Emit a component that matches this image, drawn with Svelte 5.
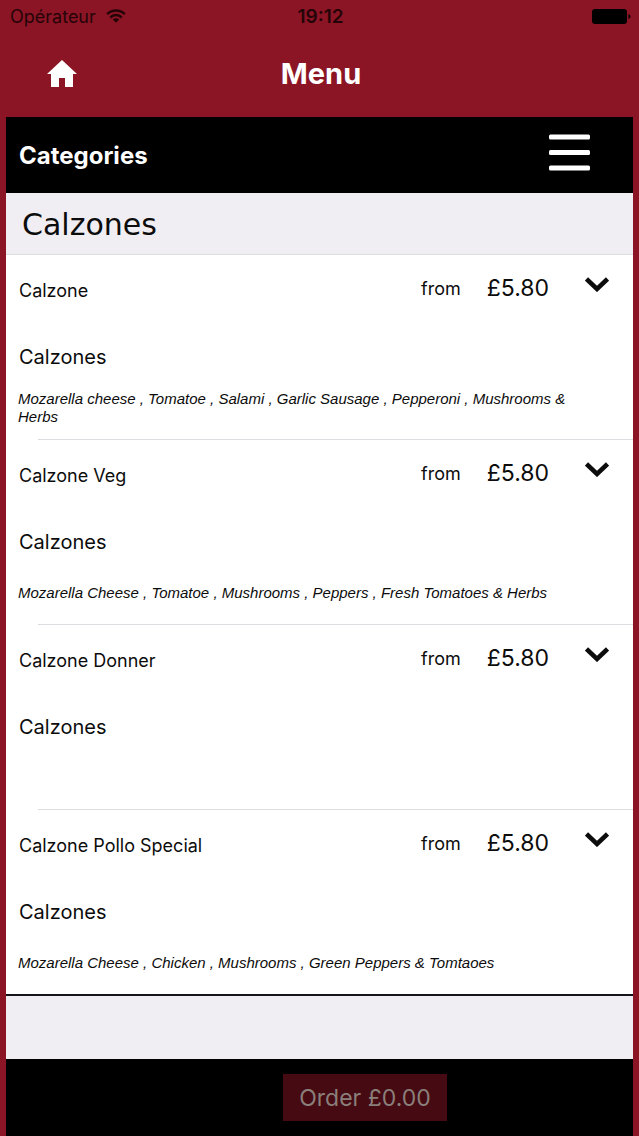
<script>
	const category = 'Calzones';

	const items = [
		{
			name: 'Calzone',
			price: 5.8,
			description:
				'Mozarella cheese , Tomatoe , Salami , Garlic Sausage , Pepperoni , Mushrooms & Herbs'
		},
		{
			name: 'Calzone Veg',
			price: 5.8,
			description: 'Mozarella Cheese , Tomatoe , Mushrooms , Peppers , Fresh Tomatoes & Herbs'
		},
		{ name: 'Calzone Donner', price: 5.8, description: '' },
		{
			name: 'Calzone Pollo Special',
			price: 5.8,
			description: 'Mozarella Cheese , Chicken , Mushrooms , Green Peppers & Tomtaoes'
		}
	];

	let total = $state(0);

	function formatPrice(value) {
		return '£' + value.toFixed(2);
	}
</script>

<div class="app">
	<div class="status-bar">
		<div class="carrier">
			<span>Opérateur</span>
			<svg width="20" height="14" viewBox="0 0 20 14" aria-hidden="true">
				<g fill="none" stroke="currentColor" stroke-width="2.5">
					<path d="M1.2 5.2a12.5 12.5 0 0 1 17.6 0" />
					<path d="M4.3 8.5a8 8 0 0 1 11.4 0" />
				</g>
				<path d="M10 13.8 6.8 10.6a4.5 4.5 0 0 1 6.4 0z" fill="currentColor" />
			</svg>
		</div>
		<span class="time">19:12</span>
		<svg class="battery" width="39" height="15" viewBox="0 0 39 15" aria-hidden="true">
			<rect width="35" height="15" rx="3" />
			<path d="M36.5 5q2 .8 2 2.500t-2 2.500z" />
		</svg>
	</div>

	<header class="nav">
		<a class="home" href="#home" aria-label="Home">
			<svg width="30" height="27" viewBox="0 0 30 27" aria-hidden="true">
				<path d="M15 0 30 14h-4v13h-8v-9h-6v9H4V14H0z" fill="#fff" />
			</svg>
		</a>
		<h1>Menu</h1>
	</header>

	<main class="panel">
		<div class="categories">
			<h2>Categories</h2>
			<button class="menu-button" aria-label="Show categories">
				<svg width="41" height="37" viewBox="0 0 41 37" fill="#fff" aria-hidden="true">
					<rect y=".5" width="41" height="5" rx="1.5" />
					<rect y="16" width="41" height="5" rx="1.5" />
					<rect y="31.5" width="41" height="5" rx="1.5" />
				</svg>
			</button>
		</div>

		<h3 class="section-title">{category}</h3>

		<ul class="items">
			{#each items as item}
				<li class="item">
					<div class="item-head">
						<span class="name">{item.name}</span>
						<span class="from">from</span>
						<span class="price">{formatPrice(item.price)}</span>
						<button class="expand" aria-label="Show options for {item.name}">
							<svg width="24" height="15" viewBox="0 0 24 15" aria-hidden="true">
								<path d="M1.5 2 12 12 22.5 2" fill="none" stroke="#0c0c0c" stroke-width="4.5" />
							</svg>
						</button>
					</div>
					<p class="category">{category}</p>
					<p class="description">{item.description}</p>
				</li>
			{/each}
		</ul>

		<footer class="footer">
			<button class="order" disabled={total === 0}>Order {formatPrice(total)}</button>
		</footer>
	</main>
</div>

<style>
	:global(body) {
		margin: 0;
		background: #8c1525;
	}

	.app {
		display: flex;
		flex-direction: column;
		min-height: 100vh;
		background: #8c1525;
		font-family: Inter, 'Liberation Sans', sans-serif;
		color: #0c0c0c;
	}

	h1,
	h2,
	h3,
	p,
	ul {
		margin: 0;
		padding: 0;
	}

	button {
		padding: 0;
		border: 0;
		background: none;
		font-family: inherit;
	}

	svg {
		display: block;
	}

	/* Status bar */
	.status-bar {
		display: grid;
		grid-template-columns: 1fr auto 1fr;
		align-items: center;
		height: 32px;
		padding: 0 8px 0 10px;
		font-size: 18px;
		color: #250408;
	}

	.carrier {
		display: flex;
		align-items: center;
		gap: 10px;
	}

	.time {
		font-size: 19px;
		font-weight: 600;
	}

	.battery {
		justify-self: end;
		fill: #000;
	}

	/* Title bar */
	.nav {
		display: grid;
		grid-template-columns: 1fr auto 1fr;
		align-items: center;
		height: 83px;
		padding: 0 44px 2px 47px;
	}

	.home {
		justify-self: start;
	}

	h1 {
		font-size: 29px;
		font-weight: 700;
		color: #fff;
	}

	/* Content */
	.panel {
		display: flex;
		flex: 1;
		flex-direction: column;
		margin: 0 6px;
		background: #f0eef3;
	}

	.categories {
		display: flex;
		align-items: center;
		justify-content: space-between;
		height: 76px;
		padding: 0 43px 0 13px;
		background: #000;
	}

	.menu-button {
		padding-bottom: 6px;
	}

	h2 {
		font-size: 24px;
		font-weight: 700;
		color: #fff;
	}

	.section-title {
		padding: 3px 16px 0;
		border-bottom: 1px solid #dddce0;
		font-family: 'DejaVu Sans', sans-serif;
		font-size: 30px;
		font-weight: 400;
		line-height: 58px;
	}

	.items {
		list-style: none;
		background: #fff;
	}

	.item::after {
		content: '';
		display: block;
		height: 1px;
		margin: 13px 0 0 32px;
		background: #dddce0;
	}

	.item:last-child::after {
		height: 2px;
		margin-left: 0;
		background: #14141c;
	}

	.item-head {
		display: flex;
		align-items: center;
		height: 66px;
		padding: 0 24px 0 13px;
	}

	.name {
		flex: 1;
		padding-top: 4px;
		font-size: 18px;
	}

	.from {
		font-size: 18px;
	}

	.price {
		margin: 0 36px 0 26px;
		font-size: 23px;
	}

	.expand {
		padding-bottom: 8px;
	}

	.category {
		padding: 3px 13px 0;
		font-size: 20px;
		line-height: 66px;
	}

	.description {
		display: flex;
		align-items: center;
		min-height: 36px;
		padding: 0 40px 0 12px;
		font-family: 'Liberation Sans', Arial, sans-serif;
		font-size: 15px;
		font-style: italic;
		line-height: 18px;
	}

	/* Order bar */
	.footer {
		display: flex;
		align-items: center;
		justify-content: center;
		height: 77px;
		margin-top: auto;
		padding-left: 91px;
		background: #000;
	}

	.order {
		height: 47px;
		padding: 0 16px;
		background: #460a13;
		font-size: 23px;
		color: #8a7f7a;
	}
</style>
